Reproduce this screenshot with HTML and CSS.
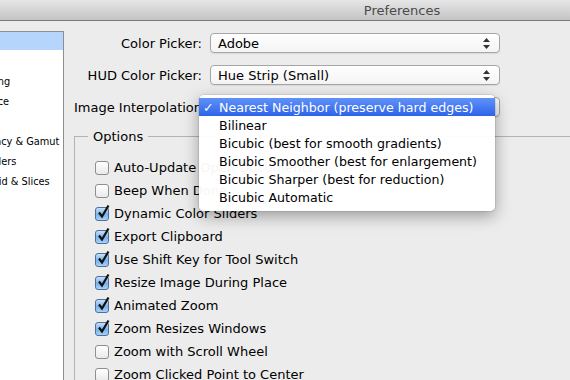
FILE: index.html
```html
<!DOCTYPE html>
<html lang="en">
<head>
  <meta charset="UTF-8">
  <title>Preferences</title>
  <link rel="stylesheet" href="styles.css">
</head>
<body>
  <div class="window">
    <div class="titlebar"><span class="title">Preferences</span></div>
    <div class="main">
      <ul class="sidebar">
        <li class="selected"><span>General</span></li>
        <li><span>Interface</span></li>
        <li><span>File Handling</span></li>
        <li><span>Performance</span></li>
        <li><span>Cursors</span></li>
        <li><span>Transparency &amp; Gamut</span></li>
        <li><span>Units &amp; Rulers</span></li>
        <li><span>Guides, Grid &amp; Slices</span></li>
        <li><span>Plug-Ins</span></li>
        <li><span>Type</span></li>
        <li><span>3D</span></li>
      </ul>

      <div class="pane">
        <div class="form">
          <label>Color Picker:</label>
          <div class="popup">Adobe
            <svg class="arrows" width="7" height="11" viewBox="0 0 7 11"><path d="M3.5 0 L7 4 L0 4 Z M0 7 L7 7 L3.5 11 Z" fill="#333"/></svg>
          </div>
          <label>HUD Color Picker:</label>
          <div class="popup">Hue Strip (Small)
            <svg class="arrows" width="7" height="11" viewBox="0 0 7 11"><path d="M3.5 0 L7 4 L0 4 Z M0 7 L7 7 L3.5 11 Z" fill="#333"/></svg>
          </div>
          <label>Image Interpolation:</label>
          <div class="popup">Nearest Neighbor (preserve hard edges)</div>
        </div>

        <fieldset class="options">
          <legend>Options</legend>
          <div class="check"><span class="box"></span>Auto-Update Open Documents</div>
          <div class="check"><span class="box"></span>Beep When Done</div>
          <div class="check"><span class="box on"><svg viewBox="0 0 14 16" width="14" height="16"><path d="M3 8.5 L6 12.5 L12.5 1.5" fill="none" stroke="#111" stroke-width="2.2"/></svg></span>Dynamic Color Sliders</div>
          <div class="check"><span class="box on"><svg viewBox="0 0 14 16" width="14" height="16"><path d="M3 8.5 L6 12.5 L12.5 1.5" fill="none" stroke="#111" stroke-width="2.2"/></svg></span>Export Clipboard</div>
          <div class="check"><span class="box on"><svg viewBox="0 0 14 16" width="14" height="16"><path d="M3 8.5 L6 12.5 L12.5 1.5" fill="none" stroke="#111" stroke-width="2.2"/></svg></span>Use Shift Key for Tool Switch</div>
          <div class="check"><span class="box on"><svg viewBox="0 0 14 16" width="14" height="16"><path d="M3 8.5 L6 12.5 L12.5 1.5" fill="none" stroke="#111" stroke-width="2.2"/></svg></span>Resize Image During Place</div>
          <div class="check"><span class="box on"><svg viewBox="0 0 14 16" width="14" height="16"><path d="M3 8.5 L6 12.5 L12.5 1.5" fill="none" stroke="#111" stroke-width="2.2"/></svg></span>Animated Zoom</div>
          <div class="check"><span class="box on"><svg viewBox="0 0 14 16" width="14" height="16"><path d="M3 8.5 L6 12.5 L12.5 1.5" fill="none" stroke="#111" stroke-width="2.2"/></svg></span>Zoom Resizes Windows</div>
          <div class="check"><span class="box"></span>Zoom with Scroll Wheel</div>
          <div class="check"><span class="box"></span>Zoom Clicked Point to Center</div>
        </fieldset>
      </div>
    </div>
  </div>

  <!-- open popup menu for Image Interpolation -->
  <ul class="menu">
    <li class="active"><span class="tick">✓</span>Nearest Neighbor (preserve hard edges)</li>
    <li>Bilinear</li>
    <li>Bicubic (best for smooth gradients)</li>
    <li>Bicubic Smoother (best for enlargement)</li>
    <li>Bicubic Sharper (best for reduction)</li>
    <li>Bicubic Automatic</li>
  </ul>
</body>
</html>
```

FILE: styles.css
```css
html, body { overflow: hidden; }
body {
  margin: 0;
  background-color: #ececec;
  color: #000;
  font-family: "DejaVu Sans", sans-serif;
  font-size: 13px;
}

.window {
  width: 570px;
  height: 380px;
  overflow: hidden;
}

.titlebar {
  width: 804px;
  height: 20px;
  display: flex;
  justify-content: center;
  align-items: center;
  background: linear-gradient(#e6e6e6, #c4c4c4);
  border-bottom: 1px solid #7a7a7a;
}
.title { color: #4a4a4a; font-size: 13px; }

.main { display: flex; }

.sidebar {
  flex: none;
  list-style: none;
  margin: 10px 0 0 0;
  padding: 0;
  width: 63px;
  height: 400px;
  background: #fff;
  border-top: 1px solid #8e8e8e;
  border-right: 1px solid #8e8e8e;
  overflow: hidden;
  font-size: 9.8px;
}
.sidebar li {
  height: 20px;
  line-height: 20px;
  white-space: nowrap;
}
.sidebar li span { margin-left: -53px; }
.sidebar .selected { background: #b5d5fd; height: 18px; line-height: 18px; margin-bottom: 2px; }

.pane { flex: none; width: 520px; padding-left: 10px; }

.form {
  display: grid;
  grid-template-columns: 128px 290px;
  grid-auto-rows: 20px;
  column-gap: 8px;
  row-gap: 12px;
  margin-top: 12px;
}
.form label {
  text-align: right;
  line-height: 21px;
  white-space: nowrap;
}
.popup {
  position: relative;
  box-sizing: border-box;
  height: 20px;
  line-height: 19px;
  padding-left: 7px;
  background: linear-gradient(#ffffff, #f4f4f4);
  border: 1px solid #a6a6a6;
  border-radius: 4px;
  box-shadow: 0 1px 1px rgba(0, 0, 0, 0.08);
  white-space: nowrap;
  overflow: hidden;
}
.arrows { position: absolute; right: 9px; top: 4px; }

.options {
  margin: 12px 0 0 0;
  padding: 12px 0 0 20px;
  border: 1px solid #b3b3b3;
  border-right: none;
  border-bottom: none;
}
.options legend {
  padding: 0 5px;
  margin-left: -7px;
  font-size: 13px;
}

.check {
  display: flex;
  align-items: center;
  height: 23px;
  white-space: nowrap;
}
.box {
  position: relative;
  box-sizing: border-box;
  width: 14px;
  height: 14px;
  margin-right: 5px;
  border: 1px solid #8e8e8e;
  border-radius: 3px;
  background: linear-gradient(#ffffff, #e9e9e9);
}
.box.on {
  border-color: #4f6f96;
  background: linear-gradient(#c6e0fb, #78b2ec 55%, #a8d2fb);
}
.box svg { position: absolute; left: 0; top: -4px; }

.menu {
  position: absolute;
  left: 199px;
  top: 95px;
  width: 296px;
  margin: 0;
  padding: 3px 0 5px 0;
  list-style: none;
  background: rgba(255, 255, 255, 0.96);
  border-radius: 5px;
  box-shadow: 0 5px 16px rgba(0, 0, 0, 0.35), 0 0 0 1px rgba(0, 0, 0, 0.08);
  font-size: 12.6px;
}
.menu li {
  position: relative;
  height: 18px;
  line-height: 19px;
  padding-left: 20px;
  white-space: nowrap;
}
.menu .active {
  color: #fff;
  background: linear-gradient(#6192f8, #2d63ea);
}
.tick { position: absolute; left: 4px; }
```
